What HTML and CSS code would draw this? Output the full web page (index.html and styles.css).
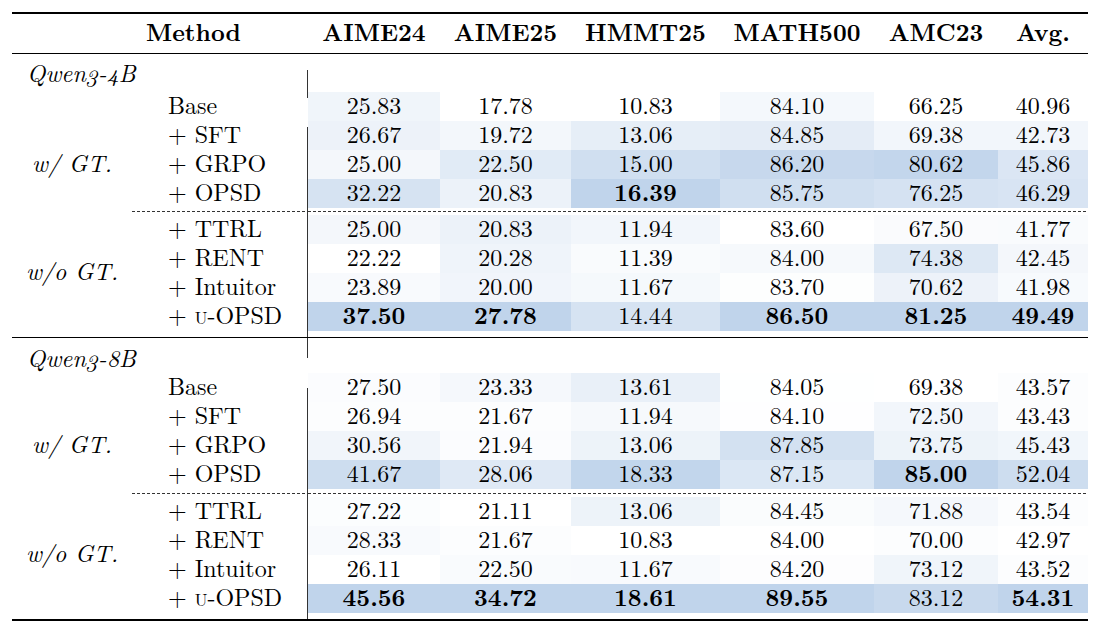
FILE: index.html
```html
<!DOCTYPE html>
<html>
<head>
<meta charset="utf-8">
<link rel="stylesheet" href="styles.css">
</head>
<body>
<div class="tbl">
  <div class="rule heavy"></div>

  <div></div>
  <div class="c2 hd hm">Method</div>
  <div class="hd">AIME24</div>
  <div class="hd">AIME25</div>
  <div class="hd">HMMT25</div>
  <div class="hd">MATH500</div>
  <div class="hd">AMC23</div>
  <div class="hd">Avg.</div>

  <div class="rule light"></div>

  <div class="grp g1">Qwen3-4B</div>
  <div class="c2 vq1"></div>
  <div class="fill"></div>

  <div></div>
  <div class="c2 nm vb1">Base</div>
  <div class="num" style="background:rgb(240,245,250)">25.83</div>
  <div class="num" style="background:rgb(255,255,255)">17.78</div>
  <div class="num" style="background:rgb(255,255,255)">10.83</div>
  <div class="num" style="background:rgb(244,248,252)">84.10</div>
  <div class="num" style="background:rgb(255,255,255)">66.25</div>
  <div class="num" style="background:rgb(255,255,255)">40.96</div>

  <div class="lab s3">w/ GT.</div>
  <div class="c2 nm vs1">+ SFT</div>
  <div class="num" style="background:rgb(237,242,249)">26.67</div>
  <div class="num" style="background:rgb(243,247,251)">19.72</div>
  <div class="num" style="background:rgb(230,238,247)">13.06</div>
  <div class="num" style="background:rgb(228,236,246)">84.85</div>
  <div class="num" style="background:rgb(242,246,251)">69.38</div>
  <div class="num" style="background:rgb(242,246,251)">42.73</div>

  <div class="c2 nm">+ GRPO</div>
  <div class="num" style="background:rgb(244,247,251)">25.00</div>
  <div class="num" style="background:rgb(225,235,246)">22.50</div>
  <div class="num" style="background:rgb(208,223,240)">15.00</div>
  <div class="num" style="background:rgb(199,216,237)">86.20</div>
  <div class="num" style="background:rgb(195,214,236)">80.62</div>
  <div class="num" style="background:rgb(219,230,244)">45.86</div>

  <div class="c2 nm">+ OPSD</div>
  <div class="num" style="background:rgb(214,227,242)">32.22</div>
  <div class="num" style="background:rgb(236,242,249)">20.83</div>
  <div class="num b" style="background:rgb(192,212,235)">16.39</div>
  <div class="num" style="background:rgb(208,223,240)">85.75</div>
  <div class="num" style="background:rgb(213,226,242)">76.25</div>
  <div class="num" style="background:rgb(216,228,243)">46.29</div>

  <div></div>
  <div class="c2 dash d7"></div>
  <div class="fill dash d7"></div>

  <div class="lab s4">w/o GT.</div>
  <div class="c2 nm">+ TTRL</div>
  <div class="num" style="background:rgb(244,247,251)">25.00</div>
  <div class="num" style="background:rgb(236,242,249)">20.83</div>
  <div class="num" style="background:rgb(242,246,251)">11.94</div>
  <div class="num" style="background:rgb(255,255,255)">83.60</div>
  <div class="num" style="background:rgb(250,251,253)">67.50</div>
  <div class="num" style="background:rgb(249,251,253)">41.77</div>

  <div class="c2 nm">+ RENT</div>
  <div class="num" style="background:rgb(255,255,255)">22.22</div>
  <div class="num" style="background:rgb(239,244,250)">20.28</div>
  <div class="num" style="background:rgb(249,251,253)">11.39</div>
  <div class="num" style="background:rgb(246,249,252)">84.00</div>
  <div class="num" style="background:rgb(221,232,244)">74.38</div>
  <div class="num" style="background:rgb(244,247,251)">42.45</div>

  <div class="c2 nm">+ Intuitor</div>
  <div class="num" style="background:rgb(248,250,253)">23.89</div>
  <div class="num" style="background:rgb(241,245,251)">20.00</div>
  <div class="num" style="background:rgb(245,249,252)">11.67</div>
  <div class="num" style="background:rgb(253,254,254)">83.70</div>
  <div class="num" style="background:rgb(237,242,249)">70.62</div>
  <div class="num" style="background:rgb(247,250,253)">41.98</div>

  <div class="c2 nm">+ <span class="sc">u</span>-OPSD</div>
  <div class="num b" style="background:rgb(192,212,235)">37.50</div>
  <div class="num b" style="background:rgb(192,212,235)">27.78</div>
  <div class="num" style="background:rgb(214,227,242)">14.44</div>
  <div class="num b" style="background:rgb(192,212,235)">86.50</div>
  <div class="num b" style="background:rgb(192,212,235)">81.25</div>
  <div class="num b" style="background:rgb(192,212,235)">49.49</div>

  <div></div>
  <div class="c2"></div>
  <div class="fill"></div>

  <div class="rule thin"></div>

  <div class="grp g2">Qwen3-8B</div>
  <div class="c2 vq2"></div>
  <div class="fill"></div>

  <div></div>
  <div class="c2 nm vb2">Base</div>
  <div class="num" style="background:rgb(251,252,254)">27.50</div>
  <div class="num" style="background:rgb(245,248,252)">23.33</div>
  <div class="num" style="background:rgb(233,240,248)">13.61</div>
  <div class="num" style="background:rgb(254,255,255)">84.05</div>
  <div class="num" style="background:rgb(255,255,255)">69.38</div>
  <div class="num" style="background:rgb(252,253,254)">43.57</div>

  <div class="lab s3">w/ GT.</div>
  <div class="c2 nm">+ SFT</div>
  <div class="num" style="background:rgb(252,253,254)">26.94</div>
  <div class="num" style="background:rgb(252,253,254)">21.67</div>
  <div class="num" style="background:rgb(246,249,252)">11.94</div>
  <div class="num" style="background:rgb(254,254,255)">84.10</div>
  <div class="num" style="background:rgb(242,246,251)">72.50</div>
  <div class="num" style="background:rgb(252,253,254)">43.43</div>

  <div class="c2 nm">+ GRPO</div>
  <div class="num" style="background:rgb(241,245,250)">30.56</div>
  <div class="num" style="background:rgb(251,252,254)">21.94</div>
  <div class="num" style="background:rgb(237,243,249)">13.06</div>
  <div class="num" style="background:rgb(211,225,241)">87.85</div>
  <div class="num" style="background:rgb(237,243,249)">73.75</div>
  <div class="num" style="background:rgb(241,246,251)">45.43</div>

  <div class="c2 nm">+ OPSD</div>
  <div class="num" style="background:rgb(205,221,239)">41.67</div>
  <div class="num" style="background:rgb(223,233,245)">28.06</div>
  <div class="num" style="background:rgb(194,214,236)">18.33</div>
  <div class="num" style="background:rgb(219,231,244)">87.15</div>
  <div class="num b" style="background:rgb(192,212,235)">85.00</div>
  <div class="num" style="background:rgb(205,221,239)">52.04</div>

  <div></div>
  <div class="c2 dash d8"></div>
  <div class="fill dash d8"></div>

  <div class="lab s4">w/o GT.</div>
  <div class="c2 nm">+ TTRL</div>
  <div class="num" style="background:rgb(251,253,254)">27.22</div>
  <div class="num" style="background:rgb(255,255,255)">21.11</div>
  <div class="num" style="background:rgb(237,243,249)">13.06</div>
  <div class="num" style="background:rgb(250,252,253)">84.45</div>
  <div class="num" style="background:rgb(245,248,252)">71.88</div>
  <div class="num" style="background:rgb(252,253,254)">43.54</div>

  <div class="c2 nm">+ RENT</div>
  <div class="num" style="background:rgb(248,250,253)">28.33</div>
  <div class="num" style="background:rgb(252,253,254)">21.67</div>
  <div class="num" style="background:rgb(255,255,255)">10.83</div>
  <div class="num" style="background:rgb(255,255,255)">84.00</div>
  <div class="num" style="background:rgb(252,253,254)">70.00</div>
  <div class="num" style="background:rgb(255,255,255)">42.97</div>

  <div class="c2 nm">+ Intuitor</div>
  <div class="num" style="background:rgb(255,255,255)">26.11</div>
  <div class="num" style="background:rgb(249,251,253)">22.50</div>
  <div class="num" style="background:rgb(248,250,253)">11.67</div>
  <div class="num" style="background:rgb(253,253,254)">84.20</div>
  <div class="num" style="background:rgb(240,245,250)">73.12</div>
  <div class="num" style="background:rgb(252,253,254)">43.52</div>

  <div class="c2 nm">+ <span class="sc">u</span>-OPSD</div>
  <div class="num b" style="background:rgb(192,212,235)">45.56</div>
  <div class="num b" style="background:rgb(192,212,235)">34.72</div>
  <div class="num b" style="background:rgb(192,212,235)">18.61</div>
  <div class="num b" style="background:rgb(192,212,235)">89.55</div>
  <div class="num" style="background:rgb(200,217,237)">83.12</div>
  <div class="num b" style="background:rgb(192,212,235)">54.31</div>

  <div></div>
  <div class="c2"></div>
  <div class="fill"></div>

  <div class="rule heavy"></div>
</div>
</body>
</html>
```

FILE: styles.css
```css
html, body {
  margin: 0;
  padding: 0;
  background: #fff;
}

body {
  font-family: "Latin Modern Roman", "Liberation Serif", serif;
  font-size: 24px;
  color: #000;
}

.tbl {
  margin: 12px 0 0 12px;
  width: 1076px;
  display: grid;
  grid-template-columns: 120px 176px 132px 131px 149px 154px 124px 90px;
  grid-template-rows:
    2px 39px 1px 38px
    29px 29px 29px 29px
    7px
    29px 29px 29px 29px
    6px 1px 35px
    29px 29px 29px 29px
    8px
    29px 29px 29px 29px
    6px 2px;
  line-height: 25px;
}

.tbl > div {
  box-sizing: border-box;
  min-width: 0;
}

.rule {
  grid-column: 1 / -1;
  background: #000;
}

.fill {
  grid-column: span 6;
}

.c2 {
  border-right: 1px solid #333;
}

.hd {
  font-weight: 700;
  text-align: center;
  line-height: 35px;
}

.c2.hm {
  border-right: none;
  text-align: left;
  padding-left: 14px;
}

.grp {
  font-style: italic;
  font-variant-numeric: oldstyle-nums;
  white-space: nowrap;
  padding-left: 15px;
}

.g1 {
  padding-top: 6px;
}

.g2 {
  padding-top: 7px;
}

.lab {
  font-style: italic;
  display: flex;
  align-items: center;
  justify-content: center;
  padding-bottom: 5px;
}

.s3 {
  grid-row: span 3;
}

.s4 {
  grid-row: span 4;
}

.nm {
  padding-left: 36px;
  white-space: nowrap;
}

.sc {
  font-variant: small-caps;
}

.num {
  text-align: center;
}

.num.b {
  font-weight: 700;
}

/* broken segments of the vertical rule */
.c2.vq1,
.c2.vb1,
.c2.vs1,
.c2.vq2,
.c2.vb2 {
  border-right: none;
  background-image: linear-gradient(#333, #333);
  background-repeat: no-repeat;
}

.c2.vq1 {
  background-size: 1px 22px;
  background-position: right bottom;
}

.c2.vb1 {
  background-size: 1px 6px;
  background-position: right top;
}

.c2.vs1 {
  background-size: 1px 23px;
  background-position: right bottom;
}

.c2.vq2 {
  background-size: 1px 20px;
  background-position: right top;
}

.c2.vb2 {
  background-size: 1px 14px;
  background-position: right bottom;
}

.dash {
  background-image: linear-gradient(to right, #333 3px, transparent 3px);
  background-size: 5px 1px;
  background-repeat: repeat-x;
}

.d7 {
  background-position: 0 3px;
}

.d8 {
  background-position: 0 4px;
}
```
